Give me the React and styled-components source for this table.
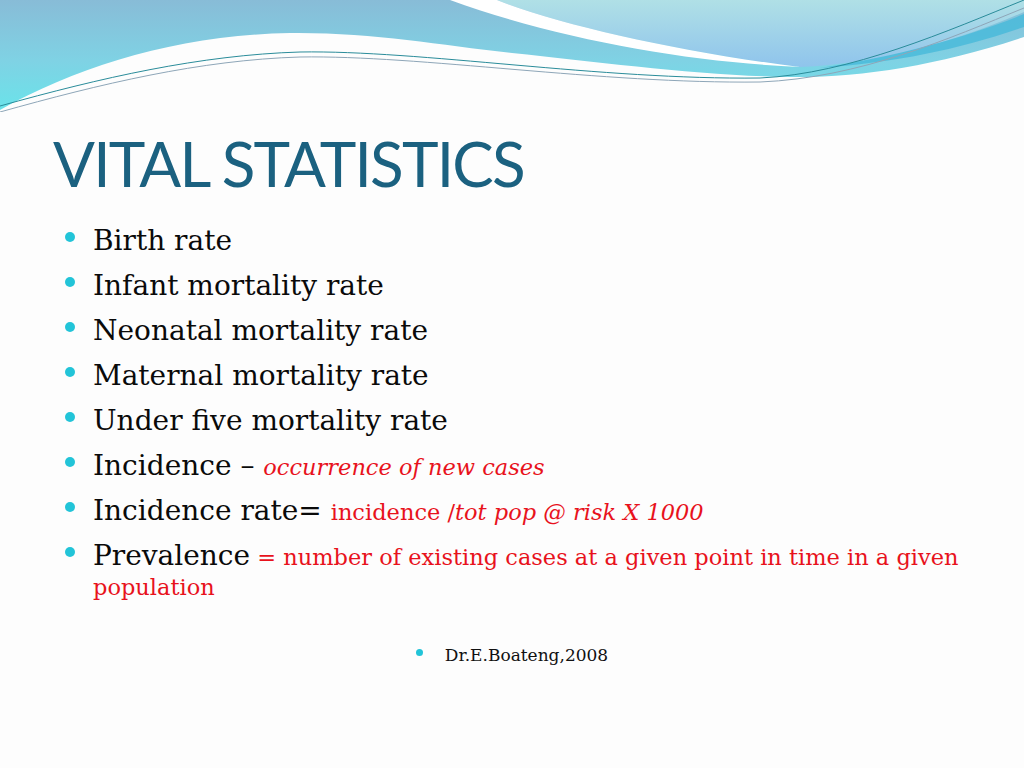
import styled, { createGlobalStyle } from "styled-components";

const GlobalStyle = createGlobalStyle`
  html, body {
    margin: 0;
    padding: 0;
    background: #fdfdfd;
  }
`;

const Slide = styled.div`
  width: 1024px;
  height: 768px;
  overflow: hidden;
  background: #fdfdfd;
  display: flex;
  flex-direction: column;
`;

const WaveArt = styled.svg`
  display: block;
  width: 1024px;
  height: 112px;
  flex-shrink: 0;
`;

const Title = styled.h1`
  margin: 20px 0 0 53px;
  font-family: Lato, "Open Sans", sans-serif;
  font-weight: 400;
  font-size: 62px;
  line-height: 62px;
  letter-spacing: -1.8px;
  color: #1b6180;
`;

const List = styled.ul`
  list-style: none;
  margin: 17px 0 0;
  padding: 0 0 0 65px;
`;

const Item = styled.li`
  display: flex;
  align-items: flex-start;
  gap: 18px;
  padding-top: 15px;
  font-family: "DejaVu Serif", "Liberation Serif", serif;
  font-size: 28px;
  line-height: 30px;
  color: #0a0a0a;
`;

const Dot = styled.span`
  flex-shrink: 0;
  width: ${({ $small }) => ($small ? "7px" : "10px")};
  height: ${({ $small }) => ($small ? "7px" : "10px")};
  margin-top: 6px;
  border-radius: 50%;
  background: #22c4d8;
`;

const ItemText = styled.div`
  width: 880px;
`;

const Note = styled.span`
  font-size: 22.5px;
  line-height: 26px;
  color: #e8121c;
  font-style: ${({ $italic }) => ($italic ? "italic" : "normal")};
`;

const Footer = styled.div`
  display: flex;
  justify-content: center;
  align-items: flex-start;
  gap: 22px;
  margin-top: 42px;
`;

const FooterText = styled.span`
  font-family: "DejaVu Serif", "Liberation Serif", serif;
  font-size: 17px;
  line-height: 24px;
  color: #111;
`;

const items = [
  { label: "Birth rate" },
  { label: "Infant mortality rate" },
  { label: "Neonatal mortality rate" },
  { label: "Maternal mortality rate" },
  { label: "Under five mortality rate" },
  {
    label: "Incidence – ",
    note: <Note $italic>occurrence of new cases</Note>,
  },
  {
    label: "Incidence rate=",
    note: (
      <>
        {" "}
        <Note>incidence /</Note>
        <Note $italic>tot pop @ risk X 1000</Note>
      </>
    ),
  },
  {
    label: "Prevalence",
    note: (
      <Note>
        {" "}= number of existing cases at a given point in time in a given
        population
      </Note>
    ),
  },
];

function Waves() {
  return (
    <WaveArt viewBox="0 0 1024 112" preserveAspectRatio="none">
      <defs>
        <linearGradient id="band" x1="0" y1="0" x2="0" y2="1">
          <stop offset="0" stopColor="#88bcd7" />
          <stop offset="0.55" stopColor="#7fd2e4" />
          <stop offset="1" stopColor="#6ae3ea" />
        </linearGradient>
        <linearGradient id="sky" x1="0" y1="0" x2="0" y2="1">
          <stop offset="0" stopColor="#b0e0e6" />
          <stop offset="1" stopColor="#8fc4ec" />
        </linearGradient>
      </defs>
      <path
        d="M0,0 H1024 V37 C940,65 860,78 790,77 C700,76 600,62 512,53 C440,45 370,32 290,33 C180,35 80,65 0,110 Z"
        fill="url(#band)"
      />
      <path
        d="M497,0 C560,25 680,52 800,67 C880,64 960,40 1024,12 V0 Z"
        fill="url(#sky)"
      />
      <path
        d="M450,0 L497,0 C560,25 680,52 800,67 C690,62 560,40 450,0 Z"
        fill="#ffffff"
      />
      <path
        d="M820,68 C900,56 970,36 1024,14 V27 C960,49 900,62 820,68 Z"
        fill="#46b9da"
        opacity="0.8"
      />
      <path
        d="M0,106 C100,78 200,55 300,52 C420,50 600,80 760,78 C850,74 950,30 1024,0"
        fill="none"
        stroke="#2a8c9a"
        strokeWidth="1"
      />
      <path
        d="M0,112 C100,84 200,60 300,57 C420,55 600,84 760,82 C860,78 950,38 1024,8"
        fill="none"
        stroke="#8ea6b8"
        strokeWidth="1"
      />
    </WaveArt>
  );
}

export default function App() {
  return (
    <>
      <GlobalStyle />
      <Slide>
        <Waves />
        <Title>VITAL STATISTICS</Title>
        <List>
          {items.map((item) => (
            <Item key={item.label}>
              <Dot />
              <ItemText>
                {item.label}
                {item.note}
              </ItemText>
            </Item>
          ))}
        </List>
        <Footer>
          <Dot $small />
          <FooterText>Dr.E.Boateng,2008</FooterText>
        </Footer>
      </Slide>
    </>
  );
}
